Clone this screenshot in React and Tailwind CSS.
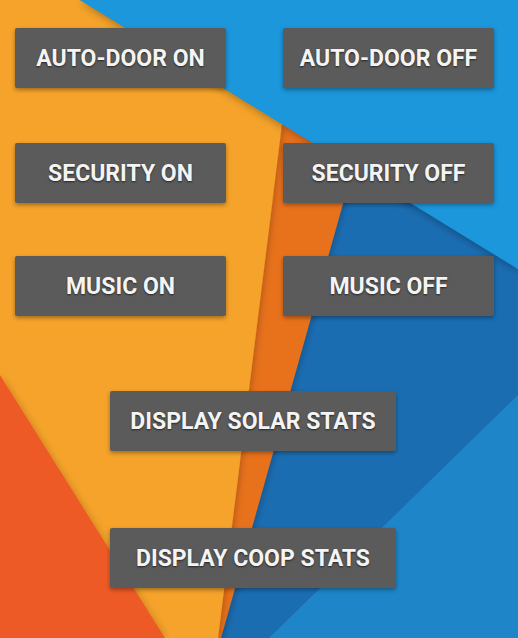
const btn =
  "flex items-center justify-center h-[60px] pt-[3px] rounded-[2px] bg-[#5b5b5b] text-[#f4f4f4] text-[23px] font-bold uppercase shadow-[0_2px_4px_rgba(0,0,0,0.35)] [text-shadow:0_1px_2px_rgba(0,0,0,0.6)]";

function Wallpaper() {
  return (
    <svg
      className="absolute inset-0 w-full h-full"
      viewBox="0 0 518 638"
      preserveAspectRatio="none"
    >
      <defs>
        <filter id="drop" x="-20%" y="-20%" width="140%" height="140%">
          <feDropShadow dx="0" dy="2" stdDeviation="4" floodColor="#000" floodOpacity="0.3" />
        </filter>
      </defs>
      <rect width="518" height="638" fill="#1b6db2" />
      <polygon points="518,395 269,638 518,638" fill="#1e86c8" />
      <polygon points="282,124 353,168 221,638 200,638" fill="#e8721e" filter="url(#drop)" />
      <polygon points="0,0 80,0 282,124 218,638 0,638" fill="#f5a32c" filter="url(#drop)" />
      <polygon points="0,375 165,638 0,638" fill="#ee5a27" filter="url(#drop)" />
      <polygon points="80,0 518,0 518,269" fill="#1f97db" filter="url(#drop)" />
    </svg>
  );
}

export default function App() {
  return (
    <div className="relative w-[518px] h-[638px] overflow-hidden font-['Roboto',sans-serif]">
      <Wallpaper />

      <div className="relative flex flex-col pt-[28px]">
        {/* on / off pairs */}
        <div className="flex pl-[15px] gap-[57px]">
          <button className={`${btn} w-[211px]`}>Auto-Door On</button>
          <button className={`${btn} w-[211px]`}>Auto-Door Off</button>
        </div>
        <div className="flex pl-[15px] gap-[57px] mt-[55px]">
          <button className={`${btn} w-[211px]`}>Security On</button>
          <button className={`${btn} w-[211px]`}>Security Off</button>
        </div>
        <div className="flex pl-[15px] gap-[57px] mt-[53px]">
          <button className={`${btn} w-[211px]`}>Music On</button>
          <button className={`${btn} w-[211px]`}>Music Off</button>
        </div>

        {/* stats */}
        <button className={`${btn} w-[286px] ml-[110px] mt-[75px]`}>Display Solar Stats</button>
        <button className={`${btn} w-[286px] ml-[110px] mt-[77px]`}>Display Coop Stats</button>
      </div>
    </div>
  );
}
